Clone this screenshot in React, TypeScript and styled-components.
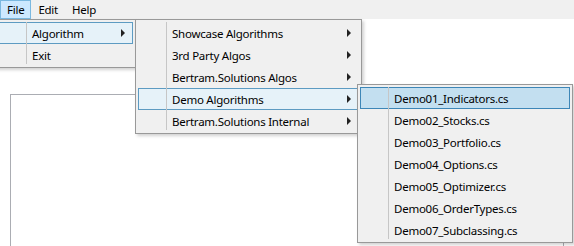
import React from "react";
import styled, { createGlobalStyle, css } from "styled-components";

const GlobalStyle = createGlobalStyle`
  html, body {
    margin: 0;
    padding: 0;
    background: #fff;
  }
  body {
    font-family: "Noto Sans", "Segoe UI", sans-serif;
    font-size: 11.5px;
    letter-spacing: -0.25px;
    color: #000;
  }
`;

type Highlight = "none" | "open" | "hover";

const Window = styled.div`
  position: relative;
  width: 574px;
  height: 246px;
  overflow: hidden;
  background: #fff;
`;

const MenuBar = styled.div`
  display: flex;
  height: 19px;
  background: #f0f0f0;
`;

const BarItem = styled.div<{ $active?: boolean }>`
  box-sizing: border-box;
  height: 19px;
  padding: 0 6px;
  line-height: 17px;
  border: 1px solid transparent;
  ${p =>
    p.$active &&
    css`
      background: #cce8ff;
      border-color: #7ab8e0;
    `}
`;

const Content = styled.div`
  padding: 75px 10px 0 10px;
`;

const Panel = styled.div`
  height: 220px;
  border: 1px solid #abadb3;
  background: #fff;
`;

const Popup = styled.div<{ $left: number; $top: number; $width: number }>`
  position: absolute;
  left: ${p => p.$left}px;
  top: ${p => p.$top}px;
  width: ${p => p.$width}px;
  box-sizing: border-box;
  padding: 2px 2px 1px;
  background: #f0f0f0;
  border: 1px solid #999;
  box-shadow: 2px 2px 3px rgba(0, 0, 0, 0.18);
  z-index: 2;

  &::after {
    content: "";
    position: absolute;
    left: 30px;
    top: 2px;
    bottom: 3px;
    width: 1px;
    background: #c6c6c6;
    z-index: 1;
  }
`;

const Item = styled.div<{ $hl: Highlight }>`
  position: relative;
  box-sizing: border-box;
  display: flex;
  align-items: center;
  height: 22px;
  padding-left: 33px;
  border: 1px solid transparent;
  white-space: nowrap;
  ${p =>
    p.$hl === "open" &&
    css`
      background: #e6f2f9;
      border-color: #5d9bc2;
    `}
  ${p =>
    p.$hl === "hover" &&
    css`
      background: #c3dff0;
      border-color: #3d86b7;
    `}
`;

const Label = styled.span`
  flex: 1;
`;

const Arrow = styled.span`
  width: 0;
  height: 0;
  margin-right: 7px;
  border-left: 4px solid #222;
  border-top: 4px solid transparent;
  border-bottom: 4px solid transparent;
`;

interface Entry {
  label: string;
  sub?: boolean;
  hl?: Highlight;
}

const fileMenu: Entry[] = [
  { label: "Algorithm", sub: true, hl: "open" },
  { label: "Exit" },
];

const algoMenu: Entry[] = [
  { label: "Showcase Algorithms", sub: true },
  { label: "3rd Party Algos", sub: true },
  { label: "Bertram.Solutions Algos", sub: true },
  { label: "Demo Algorithms", sub: true, hl: "open" },
  { label: "Bertram.Solutions Internal", sub: true },
];

const demoMenu: Entry[] = [
  { label: "Demo01_Indicators.cs", hl: "hover" },
  { label: "Demo02_Stocks.cs" },
  { label: "Demo03_Portfolio.cs" },
  { label: "Demo04_Options.cs" },
  { label: "Demo05_Optimizer.cs" },
  { label: "Demo06_OrderTypes.cs" },
  { label: "Demo07_Subclassing.cs" },
];

const Menu = ({ items, left, top, width }: { items: Entry[]; left: number; top: number; width: number }) => (
  <Popup $left={left} $top={top} $width={width}>
    {items.map(it => (
      <Item key={it.label} $hl={it.hl ?? "none"}>
        <Label>{it.label}</Label>
        {it.sub && <Arrow />}
      </Item>
    ))}
  </Popup>
);

export default function App() {
  return (
    <Window>
      <GlobalStyle />
      <MenuBar>
        <BarItem $active>File</BarItem>
        <BarItem>Edit</BarItem>
        <BarItem>Help</BarItem>
      </MenuBar>
      <Content>
        <Panel />
      </Content>
      <Menu items={fileMenu} left={-5} top={19} width={141} />
      <Menu items={algoMenu} left={135} top={19} width={227} />
      <Menu items={demoMenu} left={357} top={84} width={216} />
    </Window>
  );
}
